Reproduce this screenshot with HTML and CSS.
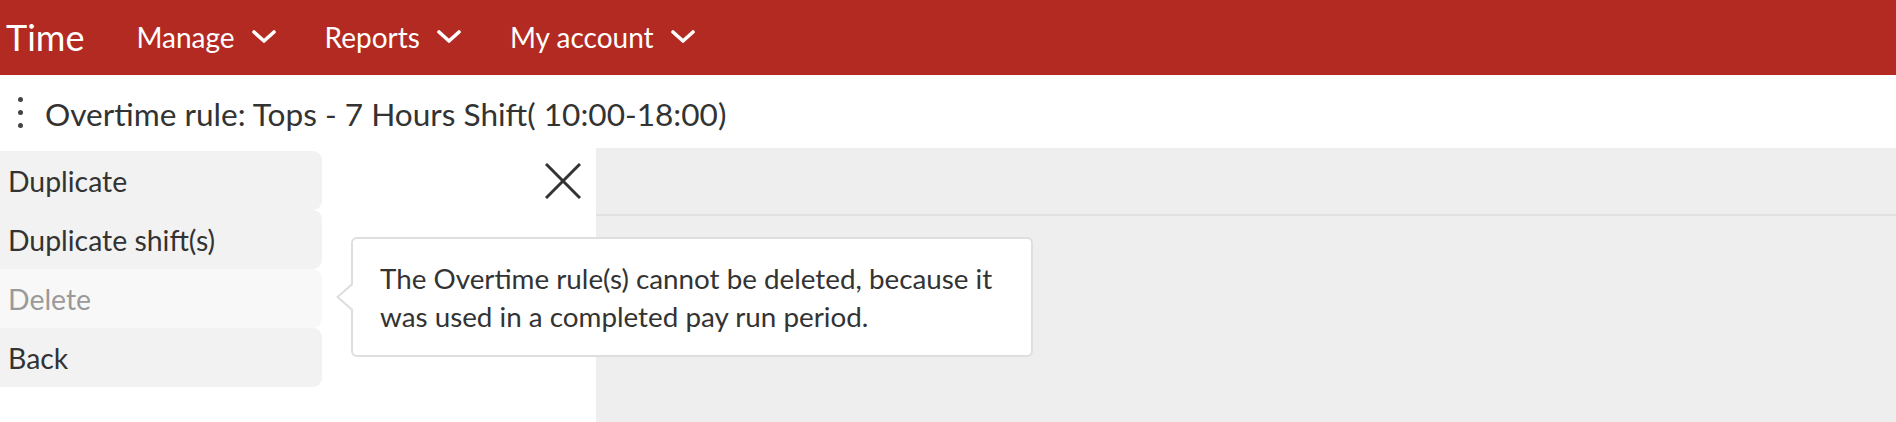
FILE: index.html
```html
<!DOCTYPE html>
<html lang="en">
<head>
<meta charset="utf-8">
<title>Time</title>
<link rel="stylesheet" href="styles.css">
</head>
<body>
<header class="topbar">
  <div class="brand">Time</div>
  <nav class="nav">
    <div class="nav-item"><span>Manage</span><svg class="chev" viewBox="0 0 24 14" width="24" height="14"><polyline points="2,2 12,11 22,2"/></svg></div>
    <div class="nav-item"><span>Reports</span><svg class="chev" viewBox="0 0 24 14" width="24" height="14"><polyline points="2,2 12,11 22,2"/></svg></div>
    <div class="nav-item"><span>My account</span><svg class="chev" viewBox="0 0 24 14" width="24" height="14"><polyline points="2,2 12,11 22,2"/></svg></div>
  </nav>
</header>
<div class="titlebar">
  <div class="kebab"><i></i><i></i><i></i></div>
  <h1 class="title">Overtime rule: Tops - 7 Hours Shift( 10:00-18:00)</h1>
</div>
<div class="main">
  <aside class="side">
    <ul class="menu">
      <li class="menu-item">Duplicate</li>
      <li class="menu-item">Duplicate shift(s)</li>
      <li class="menu-item disabled">Delete</li>
      <li class="menu-item">Back</li>
    </ul>
    <button class="close" aria-label="Close"><svg viewBox="0 0 36 36" width="36" height="36"><line x1="1" y1="1" x2="35" y2="35"/><line x1="35" y1="1" x2="1" y2="35"/></svg></button>
    <div class="tooltip">
      <span class="arrow"></span>
      The Overtime rule(s) cannot be deleted, because it was used in a completed pay run period.
    </div>
  </aside>
  <section class="panel">
    <div class="panel-head"></div>
    <div class="panel-body"></div>
  </section>
</div>
</body>
</html>
```
FILE: styles.css
```css
* { box-sizing: border-box; }
html, body { margin: 0; padding: 0; }
body {
  font-family: Lato, "Open Sans", "Liberation Sans", sans-serif;
  color: #333;
  background: #fff;
  width: 1896px;
  height: 422px;
  overflow: hidden;
}
.topbar {
  height: 75px;
  background: #b22a21;
  color: #fff;
  display: flex;
  align-items: center;
  padding-left: 6px;
}
.brand {
  font-size: 36px;
  margin-right: 52px;
  position: relative;
  top: -1px;
}
.nav {
  display: flex;
  align-items: center;
  gap: 49px;
  position: relative;
  top: -1px;
}
.nav-item {
  display: flex;
  align-items: center;
  gap: 17px;
  font-size: 28px;
}
.chev { display: block; }
.chev polyline {
  fill: none;
  stroke: #fff;
  stroke-width: 3.6;
  stroke-linecap: round;
  stroke-linejoin: round;
}
.titlebar {
  height: 73px;
  display: flex;
  align-items: center;
  padding-left: 18px;
}
.kebab {
  display: flex;
  flex-direction: column;
  gap: 8px;
  width: 6px;
  margin-right: 21px;
  margin-top: 2px;
}
.kebab i {
  display: block;
  width: 5px;
  height: 5px;
  border-radius: 50%;
  background: #444;
}
.title {
  margin: 0;
  font-size: 31.6px;
  font-weight: 400;
  color: #333;
  position: relative;
  top: 2px;
}
.main {
  display: flex;
  height: 274px;
}
.side {
  width: 596px;
  flex: none;
  position: relative;
  background: #fff;
}
.menu {
  list-style: none;
  margin: 3px 0 0;
  padding: 0;
  width: 322px;
}
.menu-item {
  height: 59px;
  display: flex;
  align-items: center;
  padding-left: 8px;
  font-size: 28.4px;
  background: #f2f2f2;
  border-radius: 0 9px 9px 0;
  color: #333;
}
.menu-item.disabled {
  background: #f8f8f8;
  color: #9a9a9a;
}
.close {
  position: absolute;
  left: 545px;
  top: 15px;
  padding: 0;
  border: 0;
  background: none;
  width: 36px;
  height: 36px;
}
.close svg { display: block; }
.close line { stroke: #333; stroke-width: 3; }
.tooltip {
  position: absolute;
  left: 351px;
  top: 89px;
  width: 682px;
  height: 120px;
  background: #fff;
  border: 2px solid #dedede;
  border-radius: 6px;
  padding: 21px 20px 18px 27px;
  font-size: 27.8px;
  line-height: 38px;
  color: #333;
  z-index: 2;
}
.arrow {
  position: absolute;
  left: -17px;
  top: 43px;
  width: 0;
  height: 0;
  border-top: 15px solid transparent;
  border-bottom: 15px solid transparent;
  border-right: 17px solid #dedede;
}
.arrow::after {
  content: "";
  position: absolute;
  left: 3px;
  top: -13px;
  border-top: 13px solid transparent;
  border-bottom: 13px solid transparent;
  border-right: 15px solid #fff;
}
.panel {
  flex: 1;
  background: #eeeeee;
}
.panel-head {
  height: 68px;
  border-bottom: 2px solid #e1e1e1;
}
```
